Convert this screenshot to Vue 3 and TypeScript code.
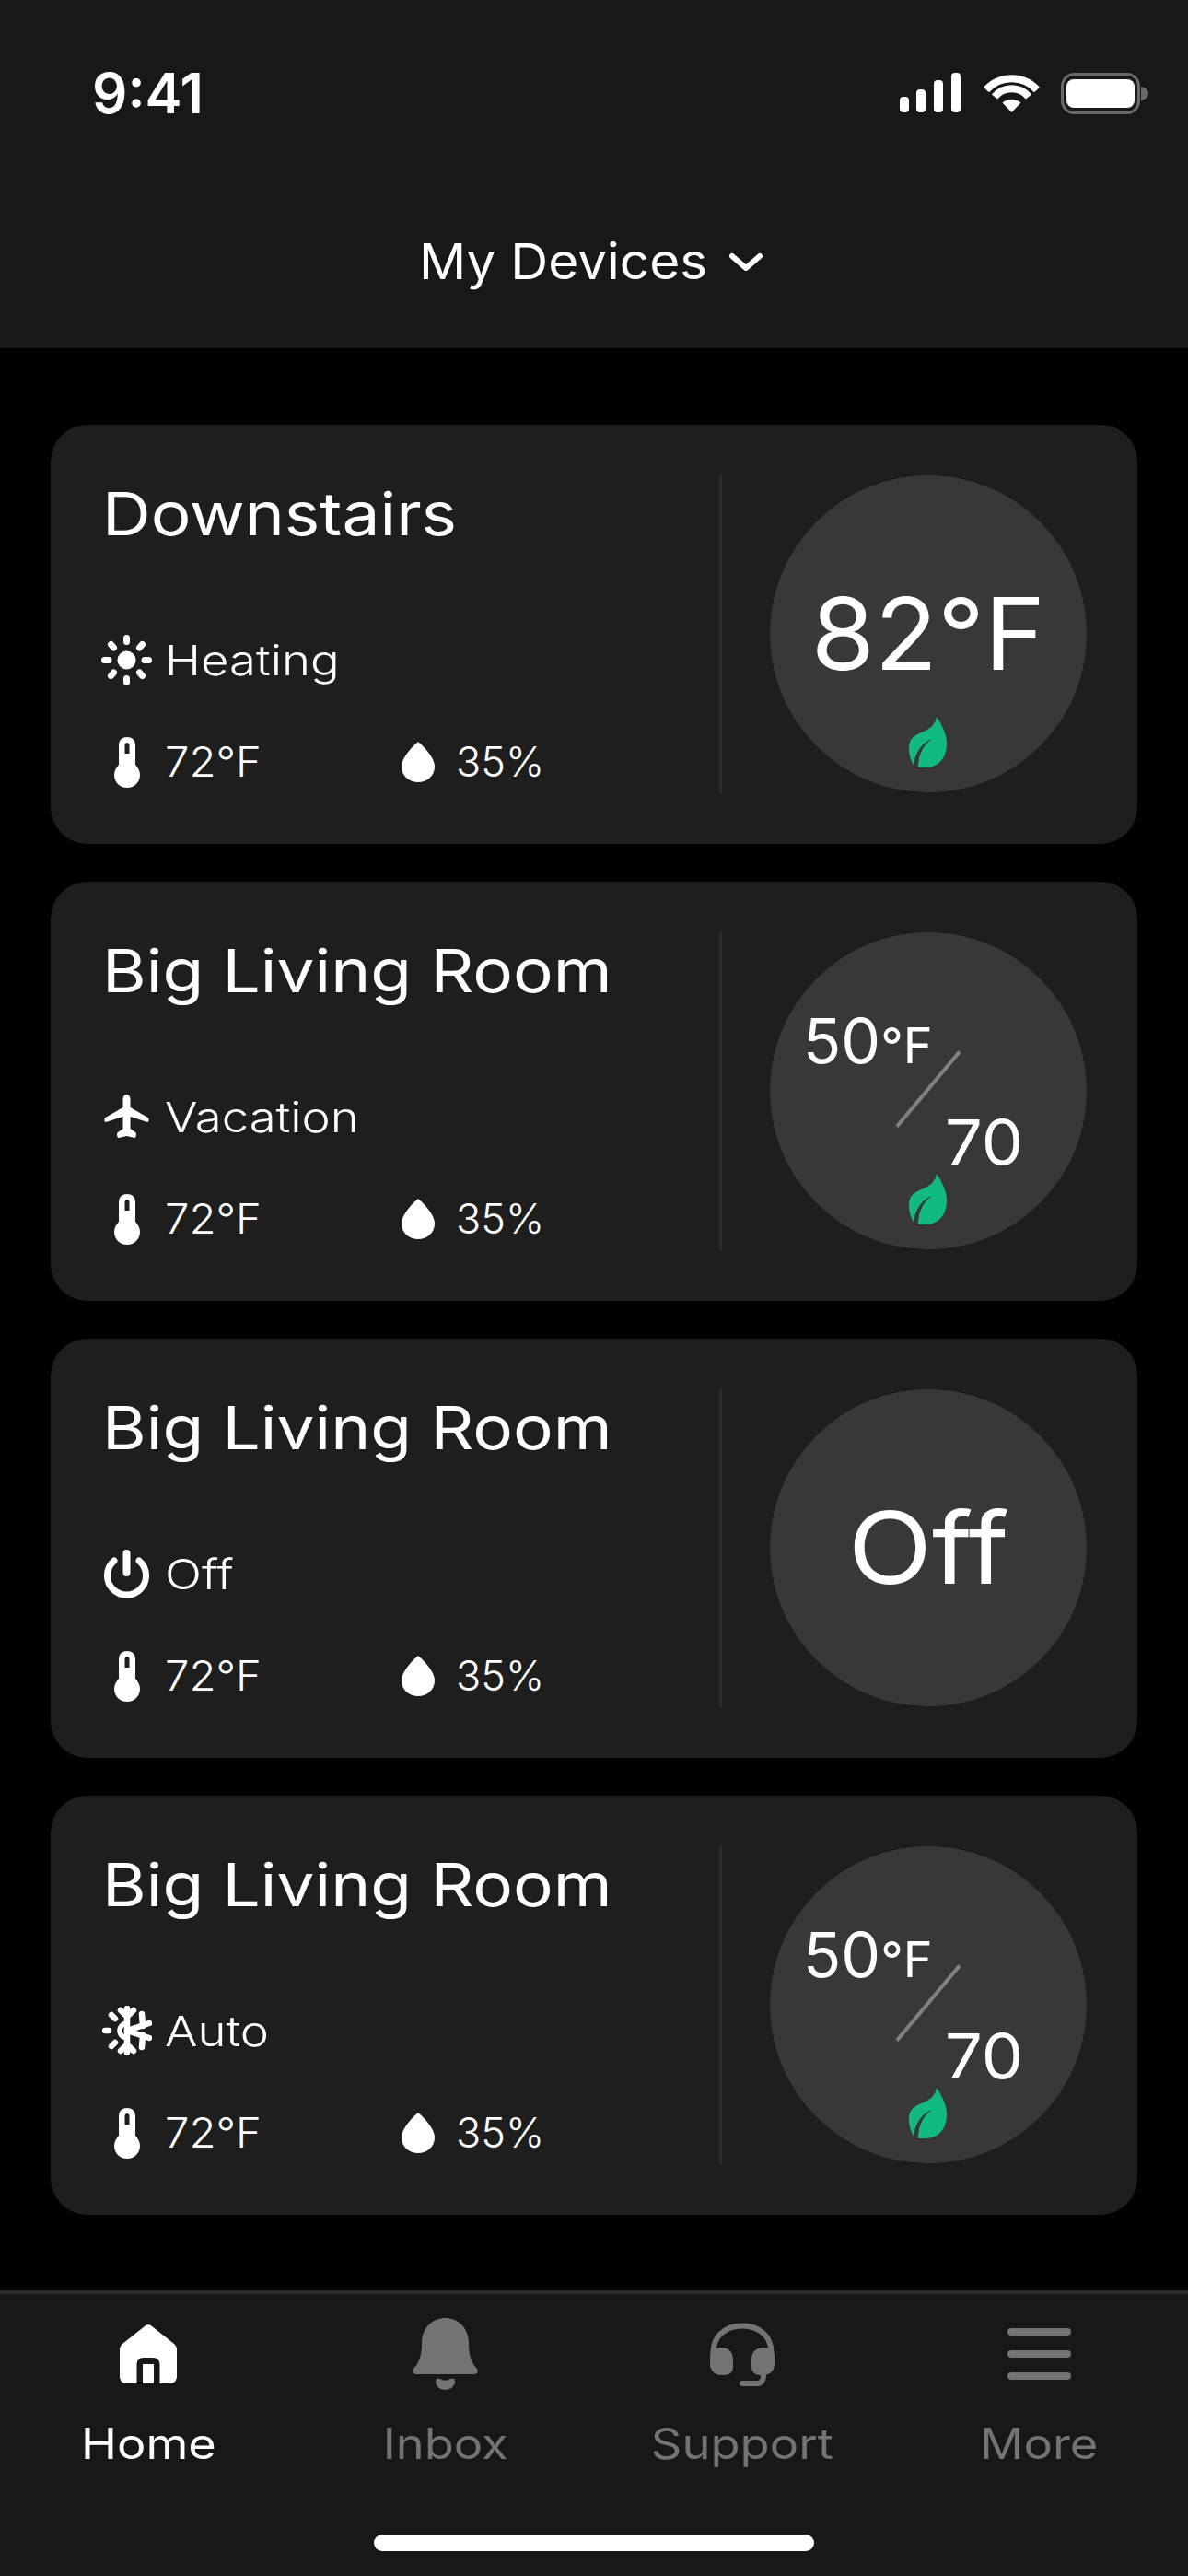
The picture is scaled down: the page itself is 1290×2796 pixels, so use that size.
<template>
  <div class="page">
    <header class="top">
      <div class="status">
        <span class="clock">9:41</span>
        <div class="status-icons">
          <svg class="signal" width="66" height="43" viewBox="0 0 66 43" fill="#fff">
            <rect x="0" y="26" width="10" height="17" rx="4" />
            <rect x="18" y="18" width="10" height="25" rx="4" />
            <rect x="37" y="8" width="10" height="35" rx="4" />
            <rect x="56" y="0" width="10" height="43" rx="4" />
          </svg>
          <svg class="wifi" width="61" height="43" viewBox="0 0 61 43" fill="none" stroke="#fff" stroke-width="8">
            <path d="M3 18.500A37 37 0 0 1 58 18.500" />
            <path d="M12 26A24 24 0 0 1 49 26" />
            <path d="M30.500 43L20.500 32.500Q30.500 25 40.500 32.500Z" fill="#fff" stroke="none" />
          </svg>
          <svg class="battery" width="95" height="45" viewBox="0 0 95 45">
            <rect x="1.500" y="1.500" width="83" height="42" rx="13" fill="none" stroke="#6a6a6a" stroke-width="3" />
            <rect x="6" y="7" width="74" height="31" rx="8" fill="#fff" />
            <path d="M87 15C92 16 95 19 95 22.500C95 26 92 29 87 30Z" fill="#6a6a6a" />
          </svg>
        </div>
      </div>
      <div class="picker">
        <span class="picker-label">My Devices</span>
        <svg width="38" height="21" viewBox="0 0 38 21" fill="none" stroke="#fff" stroke-width="6" stroke-linecap="round" stroke-linejoin="round">
          <path d="M4 4L19 17L34 4" />
        </svg>
      </div>
    </header>

    <main class="list">
      <section v-for="d in devices" :key="d.id" class="card">
        <div class="info">
          <h2 class="name">{{ d.name }}</h2>
          <div class="mode">
            <span class="ico">
              <svg v-if="d.mode === 'Heating'" width="55" height="55" viewBox="0 0 55 55" fill="#fff">
                <circle cx="27.500" cy="27.500" r="10" />
                <g stroke="#fff" stroke-width="7" stroke-linecap="round">
                  <path d="M27.500 3.500V7.500M27.500 47.500V51.500M3.500 27.500H8M47 27.500H51.500" />
                  <path d="M10.500 10.500L13.500 14M41.500 41L44.500 44.500M10.500 44.500L13.500 41M41.500 14L44.500 10.500" />
                </g>
              </svg>
              <svg v-else-if="d.mode === 'Vacation'" width="49" height="48" viewBox="0 0 49 48" fill="#fff">
                <path d="M24.500 0C27 0 28.500 2 28.500 5V14L47.500 25C49 26 49 30 47 30L28.500 24V37L34 41C35.500 42 35 47 33 47L24.500 45L16 47C14 47 13.500 42 15 41L20.500 37V24L2 30C0 30 0 26 1.500 25L20.500 14V5C20.500 2 22 0 24.500 0Z" />
              </svg>
              <svg v-else-if="d.mode === 'Off'" width="49" height="53" viewBox="0 0 49 53" fill="none" stroke="#fff" stroke-linecap="round">
                <path d="M11 12A21 21 0 1 0 38 12" stroke-width="7" />
                <path d="M24.500 4V25" stroke-width="8" />
              </svg>
              <svg v-else width="54" height="54" viewBox="0 0 54 54" fill="none" stroke="#fff" stroke-linecap="round" stroke-width="6.500">
                <path d="M3 27H7M10 10L14 14M10 44L14 40" />
                <path d="M27 19A8 8 0 0 0 27 35" stroke-width="5.500" />
                <path d="M27 3V51M20 5L27 12L34 5M20 49L27 42L34 49" />
                <path d="M27 27L51 19M27 27L51 35M43 9L44 22M43 45L44 32" />
              </svg>
            </span>
            <span class="mode-label">{{ d.mode }}</span>
          </div>
          <div class="stats">
            <div class="stat">
              <span class="ico">
                <svg width="28" height="55" viewBox="0 0 28 55">
                  <path fill="#fff" d="M5 9C5 3 9 0 14 0C19 0 23 3 23 9V30C26 33 28 37 28 41C28 49 22 55 14 55C6 55 0 49 0 41C0 37 2 33 5 30Z" />
                  <path fill="#1e1e1e" d="M11.500 8.500C11.500 5 16.500 5 16.500 8.500V18H11.500Z" />
                </svg>
              </span>
              <span class="stat-val temp">72°F</span>
            </div>
            <div class="stat">
              <span class="ico">
                <svg width="36" height="44" viewBox="0 0 36 44" fill="#fff">
                  <path d="M18 0C18 0 36 15 36 27C36 37 28 44 18 44C8 44 0 37 0 27C0 15 18 0 18 0Z" />
                </svg>
              </span>
              <span class="stat-val">35%</span>
            </div>
          </div>
        </div>
        <div class="rule" />
        <div class="dial">
          <span v-if="d.temp" class="big" :class="{ wide: d.temp === 'Off' }">{{ d.temp }}</span>
          <template v-else>
            <span class="low">50<small>°F</small></span>
            <i class="slash" />
            <span class="high">70</span>
          </template>
          <svg v-if="d.leaf" class="leaf" width="41" height="55" viewBox="0 0 41 55" fill="#12b981">
            <path d="M30 0C36 9 41 19 41 29C41 45 32 55 18 55H10C10 40 17 28 26 24C17 26 7 36 5 52C1 46 0 40 0 33C0 22 9 19 16 16C23 13 29 8 30 0Z" />
          </svg>
        </div>
      </section>
    </main>

    <nav class="tabs">
      <div class="tab on">
        <span class="tab-ico">
          <svg width="62" height="64" viewBox="0 0 62 64">
            <path fill="#fff" d="M27 2C29.500 -0.500 32.500 -0.500 35 2L59 21C61 23 62 25 62 27V56C62 61 59 64 55 64H7C3 64 0 61 0 56V27C0 25 1 23 3 21Z" />
            <path fill="#181818" d="M18.500 64V44C18.500 39 21 36 26 36H36C41 36 43.500 39 43.500 44V64Z" />
            <rect x="25" y="43" width="12" height="21" fill="#fff" />
          </svg>
        </span>
        <span class="tab-label">Home</span>
      </div>
      <div class="tab">
        <span class="tab-ico">
          <svg width="71" height="78" viewBox="0 0 71 78" fill="#737373">
            <path d="M35.500 0C48 0 61 9 61 28C61 42 65 50 70 55C72 58 70 61 67 61H4C1 61 -1 58 1 55C6 50 10 42 10 28C10 9 23 0 35.500 0Z" />
            <path d="M25 69C25 65 28 65 30 66C33 68 38 68 41 66C43 65 46 65 46 69C46 74 41 78 35.500 78C30 78 25 74 25 69Z" />
          </svg>
        </span>
        <span class="tab-label">Inbox</span>
      </div>
      <div class="tab">
        <span class="tab-ico">
          <svg width="70" height="69" viewBox="0 0 70 69" fill="#737373">
            <path d="M3.500 36V33C3.500 14 17 3.500 35 3.500C53 3.500 66.500 14 66.500 33V36" fill="none" stroke="#737373" stroke-width="6" />
            <path d="M0 36C0 30 6 27 12 27C20 27 25 32 25 40V48C25 54 21 57 15 57H12C5 57 0 52 0 45Z" />
            <path d="M70 36C70 30 64 27 58 27C50 27 45 32 45 40V48C45 54 49 57 55 57H58C65 57 70 52 70 45Z" />
            <path d="M58 56V58C58 63 55 66 51 66H35" fill="none" stroke="#737373" stroke-width="6" stroke-linecap="round" />
          </svg>
        </span>
        <span class="tab-label">Support</span>
      </div>
      <div class="tab">
        <span class="tab-ico">
          <svg width="69" height="56" viewBox="0 0 69 56" fill="#737373">
            <rect x="0" y="0" width="69" height="8" rx="4" />
            <rect x="0" y="24" width="69" height="8" rx="4" />
            <rect x="0" y="48" width="69" height="8" rx="4" />
          </svg>
        </span>
        <span class="tab-label">More</span>
      </div>
      <div class="home-bar" />
    </nav>
  </div>
</template>

<script setup lang="ts">
interface Device {
  id: number
  name: string
  mode: string
  temp?: string
  leaf: boolean
}

const devices: Device[] = [
  { id: 1, name: 'Downstairs', mode: 'Heating', temp: '82°F', leaf: true },
  { id: 2, name: 'Big Living Room', mode: 'Vacation', leaf: true },
  { id: 3, name: 'Big Living Room', mode: 'Off', temp: 'Off', leaf: false },
  { id: 4, name: 'Big Living Room', mode: 'Auto', leaf: true }
]
</script>

<style>
html,
body {
  margin: 0;
  background: #000;
}
</style>

<style scoped>
.page {
  width: 1290px;
  height: 2796px;
  display: flex;
  flex-direction: column;
  background: #000;
  color: #fff;
  font-family: Inter, 'Open Sans', sans-serif;
  overflow: hidden;
}

.top {
  height: 378px;
  background: #181818;
  box-sizing: border-box;
  flex: none;
}

.status {
  display: flex;
  justify-content: space-between;
  align-items: flex-start;
  padding: 79px 43px 0 100px;
}

.clock {
  font-size: 60px;
  font-weight: 600;
  line-height: 44px;
}

.status-icons {
  display: flex;
  align-items: flex-start;
  gap: 25px;
}

.wifi {
  margin-right: -2px;
}

.picker {
  display: flex;
  justify-content: center;
  align-items: center;
  gap: 38px;
  margin-top: 132px;
  height: 56px;
  padding-right: 6px;
  font-size: 54px;
  font-weight: 400;
  line-height: 56px;
}

.picker-label {
  display: inline-block;
  transform: scaleX(1.05);
  transform-origin: left center;
}

.list {
  flex: 1;
  display: flex;
  flex-direction: column;
  gap: 41px;
  padding: 83px 55px 0;
}

.card {
  display: flex;
  height: 455px;
  box-sizing: border-box;
  padding: 55px;
  border-radius: 40px;
  background: #1e1e1e;
}

.info {
  flex: 1;
  min-width: 0;
}

.name {
  margin: 0 0 88px 1px;
  font-size: 65px;
  font-weight: 400;
  line-height: 84px;
  transform: scaleX(1.122);
  transform-origin: left center;
}

.mode,
.stat {
  display: flex;
  align-items: center;
}

.mode {
  height: 56px;
  margin-bottom: 55px;
}

.ico {
  flex: none;
  width: 55px;
  display: flex;
  align-items: center;
  justify-content: center;
}

.mode-label,
.stat-val {
  display: inline-block;
  margin-left: 14px;
  font-size: 45px;
  font-weight: 300;
  line-height: 56px;
  transform-origin: left center;
}

.mode-label {
  padding-top: 2px;
  transform: scaleX(1.17);
}

.temp {
  transform: scaleX(1.05);
}

.stats {
  display: flex;
  height: 56px;
}

.stat {
  width: 316px;
}

.rule {
  flex: none;
  width: 3px;
  background: #2c2c2c;
}

.dial {
  position: relative;
  flex: none;
  width: 344px;
  height: 344px;
  margin-left: 52px;
  display: flex;
  align-items: center;
  justify-content: center;
  border-radius: 50%;
  background: #383838;
}

.big {
  font-size: 108px;
  font-weight: 400;
  line-height: 1;
  transform: scaleX(1.035);
}

.big.wide {
  transform: scaleX(1.105);
}

.low,
.high {
  position: absolute;
  font-size: 68px;
  font-weight: 400;
  line-height: 68px;
}

.low {
  left: 36px;
  top: 83px;
}

.low small {
  font-size: 54px;
}

.high {
  left: 190px;
  top: 193px;
  transform: scaleX(1.06);
  transform-origin: left center;
}

.slash {
  position: absolute;
  left: 170px;
  top: 117px;
  width: 4px;
  height: 106px;
  background: #808080;
  transform: rotate(40deg);
}

.leaf {
  position: absolute;
  left: 151px;
  top: 262px;
}

.tabs {
  position: relative;
  flex: none;
  height: 310px;
  box-sizing: border-box;
  display: grid;
  grid-template-columns: repeat(4, 1fr);
  border-top: 4px solid #2a2a2a;
  background: #181818;
}

.tab {
  display: flex;
  flex-direction: column;
  align-items: center;
  color: #737373;
  font-size: 46px;
  font-weight: 400;
  line-height: 56px;
}

.tab.on {
  color: #fff;
}

.tab-label {
  display: inline-block;
  transform: scaleX(1.14);
}

.tab-ico {
  height: 78px;
  margin: 26px 0 30px;
  display: flex;
  align-items: center;
}

.home-bar {
  position: absolute;
  left: 406px;
  top: 261px;
  width: 478px;
  height: 18px;
  border-radius: 9px;
  background: #fff;
}
</style>
